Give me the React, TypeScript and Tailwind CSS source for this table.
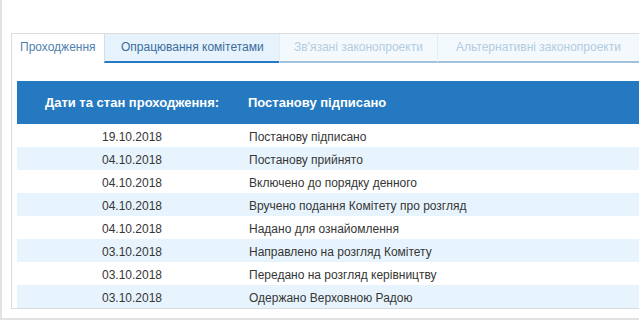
import React from "react";

const rows: [string, string][] = [
  ["19.10.2018", "Постанову підписано"],
  ["04.10.2018", "Постанову прийнято"],
  ["04.10.2018", "Включено до порядку денного"],
  ["04.10.2018", "Вручено подання Комітету про розгляд"],
  ["04.10.2018", "Надано для ознайомлення"],
  ["03.10.2018", "Направлено на розгляд Комітету"],
  ["03.10.2018", "Передано на розгляд керівництву"],
  ["03.10.2018", "Одержано Верховною Радою"],
];

export default function App() {
  return (
    <div className="w-[639px] h-[321px] overflow-hidden bg-white font-['Liberation_Sans',Arial,sans-serif]">
      <div className="w-[720px] border-l-2 border-b-2 border-[#e2e2e2] pt-[33px] pl-[9px] pb-[9px]">
        <div className="border-t border-l border-b border-[#dcdcdc]">
          <div className="flex h-[29px] text-[12px] leading-[27px]">
            <div className="w-[92px] pl-[8px] text-[#4f7fae] bg-white">Проходження</div>
            <div className="w-[175px] border-l border-[#d6dde4] border-b-2 border-b-[#2479c0] bg-[#e6f3fd] text-[#3b6c9c] pl-[16px]">
              Опрацювання комітетами
            </div>
            <div className="w-[158px] border-l border-[#e4ebf1] border-b-2 border-b-[#a3c3dd] bg-[#f4f9fd] text-[#b2cce2] pl-[14px]">
              Зв'язані законопроекти
            </div>
            <div className="flex-1 border-l border-[#e4ebf1] border-b-2 border-b-[#a3c3dd] bg-[#f4f9fd] text-[#b2cce2] pl-[18px]">
              Альтернативні законопроекти
            </div>
          </div>
          <div className="mt-[18px] pl-[5px]">
            <div className="flex h-[43px] items-center bg-[#2479c0] text-white text-[13px] font-bold">
              <div className="w-[230px] text-center">Дати та стан проходження:</div>
              <div className="pl-[1px]">Постанову підписано</div>
            </div>
            {rows.map(([d, s], i) => (
              <div
                key={i}
                className={
                  "flex h-[23px] items-center text-[12px] text-[#363636] " +
                  (i % 2 === 1 ? "bg-[#e8f4fd]" : "bg-white")
                }
              >
                <div className="w-[230px] text-center pt-[2px]">{d}</div>
                <div className="pl-[2px] pt-[2px]">{s}</div>
              </div>
            ))}
          </div>
        </div>
      </div>
    </div>
  );
}
